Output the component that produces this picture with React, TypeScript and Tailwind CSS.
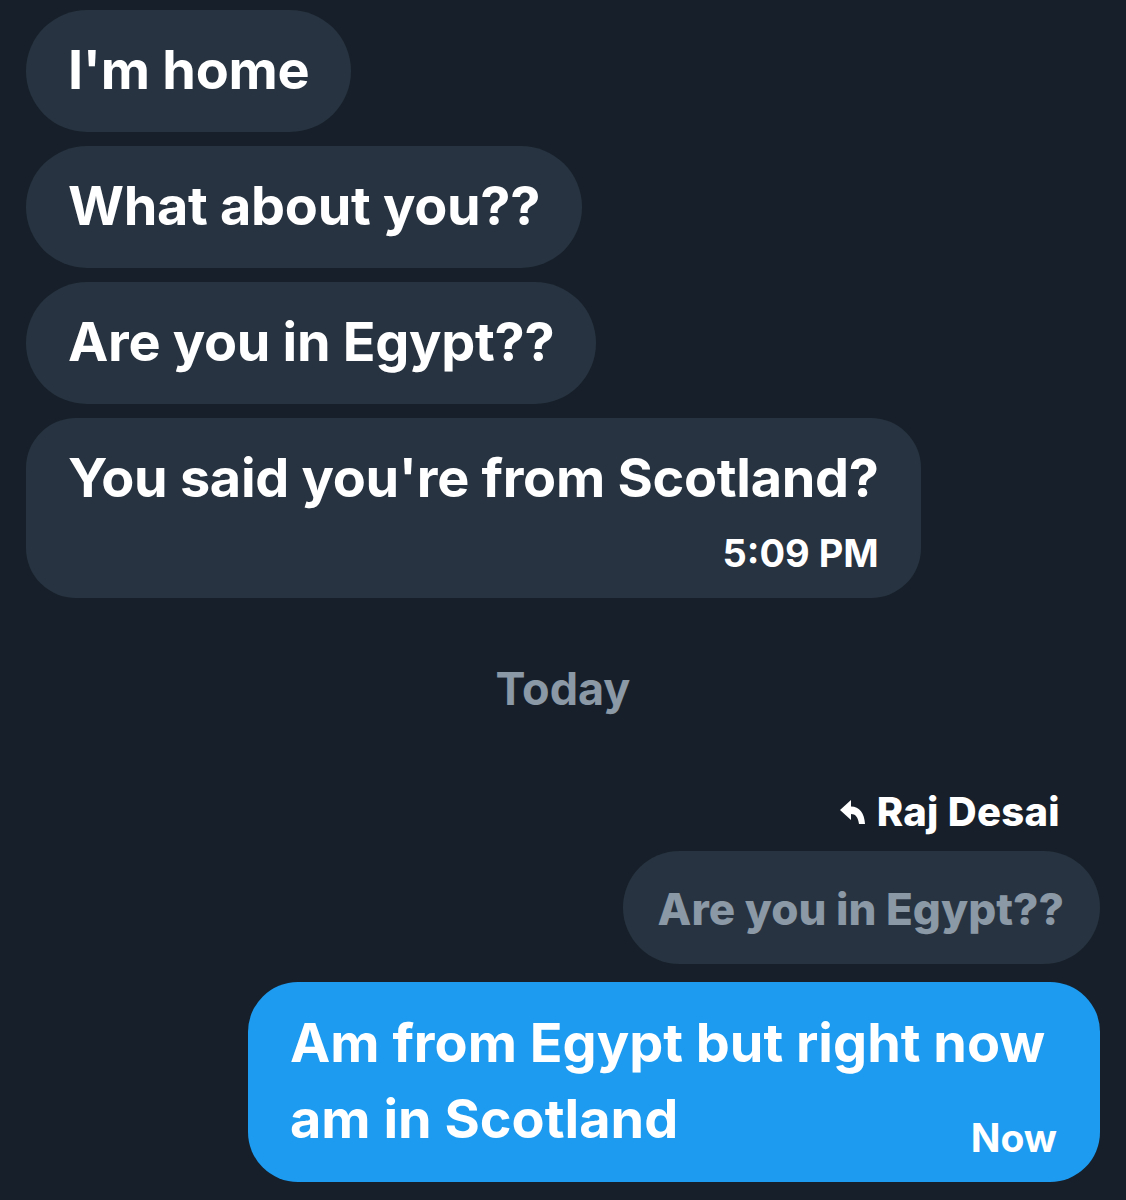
const font = { fontFamily: 'Inter, "Noto Sans", sans-serif' };

function Bubble({ text }: { text: string }) {
  return (
    <div className="bg-[#273340] rounded-full px-[42px] pt-[28px] pb-[30px] text-white font-bold text-[54px] leading-[64px] tracking-[-0.3px]">
      {text}
    </div>
  );
}

function ReplyIcon() {
  return (
    <svg width="25" height="24" viewBox="0 0 25 24" fill="white">
      <path d="M11 0 L0 10 L11 20 L11 14 C15.5 14 18 17 19 24 L25 24 C24.5 13.5 19.5 6.5 11 6.5 Z" />
    </svg>
  );
}

export default function App() {
  return (
    <div className="min-h-[1200px] bg-[#17202a] text-white" style={font}>
      <div className="px-[26px] pt-[10px] flex flex-col items-start gap-[14px]">
        <Bubble text="I'm home" />
        <Bubble text="What about you??" />
        <Bubble text="Are you in Egypt??" />
        <div className="bg-[#273340] rounded-[50px] px-[42px] pt-[28px] pb-[23px] font-bold">
          <div className="text-[54px] leading-[64px] tracking-[-0.3px]">You said you're from Scotland?</div>
          <div className="text-right text-[38px] leading-[44px] mt-[21px]">5:09 PM</div>
        </div>
      </div>

      <div className="text-center text-[#8b98a5] font-bold text-[45px] leading-[50px] mt-[66px]">Today</div>

      <div className="px-[26px] flex flex-col items-end">
        <div className="flex items-center gap-[12px] mt-[73px] mr-[40px] text-[40px] leading-[49px] font-extrabold tracking-[0.3px]">
          <ReplyIcon />
          <span>Raj Desai</span>
        </div>
        <div className="bg-[#273340] rounded-full pl-[35px] pr-[36px] pt-[30px] pb-[27px] mt-[15px] text-[#8b98a5] font-extrabold text-[44px] leading-[56px]">
          Are you in Egypt??
        </div>
        <div className="bg-[#1d9bf0] rounded-[50px] pl-[42px] pr-[43px] pt-[23px] pb-[25px] mt-[18px] w-[852px] font-bold">
          <div className="text-[54px] leading-[76px]">Am from Egypt but right now</div>
          <div className="flex items-end justify-between">
            <div className="text-[54px] leading-[76px]">am in Scotland</div>
            <div className="text-[39px] leading-[44px] mb-[-3px]">Now</div>
          </div>
        </div>
      </div>
    </div>
  );
}
